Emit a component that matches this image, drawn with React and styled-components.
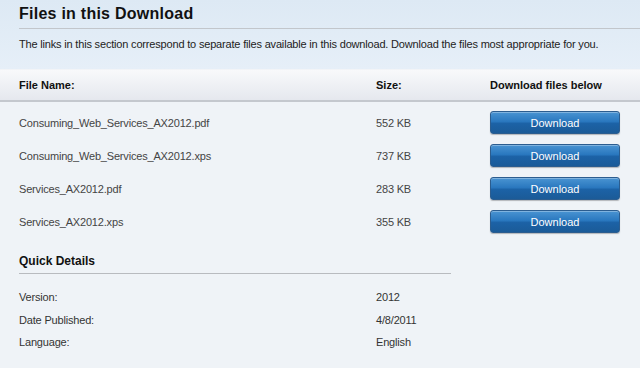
import React from 'react';
import styled, { createGlobalStyle } from 'styled-components';

const GlobalStyle = createGlobalStyle`
  html, body {
    margin: 0;
    padding: 0;
    background: #eff3f7;
  }
  body {
    font-family: Tahoma, "Liberation Sans", sans-serif;
    font-size: 11px;
    color: #333;
  }
`;

const Page = styled.div`
  width: 640px;
  height: 368px;
  overflow: hidden;
  background: #eff3f7;
`;

const Intro = styled.div`
  background: linear-gradient(#dde9f4, #e6eff8);
  padding: 5px 0 0 19px;
  height: 69px;
  box-sizing: border-box;
`;

const Title = styled.h2`
  margin: 0;
  font-size: 16px;
  font-weight: bold;
  letter-spacing: 0.25px;
  color: #111;
  padding-bottom: 5px;
  border-bottom: 1px solid #c2c6cb;
`;

const Lead = styled.p`
  margin: 9px 0 0;
  color: #222;
  letter-spacing: -0.18px;
`;

const HeaderBar = styled.div`
  display: grid;
  grid-template-columns: 357px 114px 150px;
  align-items: center;
  height: 30px;
  padding-left: 19px;
  background: linear-gradient(#f8f9fb, #e5e8ee);
  border-top: 1px solid #f2f4f7;
  border-bottom: 2px solid #c4c8ce;
  font-weight: bold;
  color: #111;
`;

const Table = styled.div`
  padding: 4px 0 0 19px;
`;

const Row = styled.div`
  display: grid;
  grid-template-columns: 357px 114px 130px;
  align-items: center;
  height: 33px;
  color: #444;
  letter-spacing: -0.18px;
`;

const DownloadButton = styled.button`
  width: 130px;
  height: 23px;
  border: 1px solid #2c5d8f;
  border-radius: 3px;
  background: linear-gradient(#4a94d2 0%, #2a78bf 45%, #1c62a6 55%, #1b5b98 100%);
  color: #fff;
  font-family: inherit;
  font-size: 11px;
  padding: 0;
  cursor: pointer;
  box-shadow: 0 1px 1px rgba(0, 0, 0, 0.25), inset 0 1px 0 rgba(255, 255, 255, 0.3);
`;

const Details = styled.div`
  padding: 16px 0 0 19px;
  width: 432px;
`;

const SubTitle = styled.h3`
  margin: 0;
  font-size: 12px;
  font-weight: bold;
  color: #111;
  padding-bottom: 5px;
  border-bottom: 1px solid #b8bbbf;
`;

const DetailList = styled.div`
  padding-top: 12px;
`;

const DetailRow = styled.div`
  display: grid;
  grid-template-columns: 357px 1fr;
  height: 22.5px;
  align-items: center;
  color: #333;
  letter-spacing: -0.18px;
`;

const files = [
  { name: 'Consuming_Web_Services_AX2012.pdf', size: '552 KB' },
  { name: 'Consuming_Web_Services_AX2012.xps', size: '737 KB' },
  { name: 'Services_AX2012.pdf', size: '283 KB' },
  { name: 'Services_AX2012.xps', size: '355 KB' },
];

const details = [
  ['Version:', '2012'],
  ['Date Published:', '4/8/2011'],
  ['Language:', 'English'],
];

export default function App() {
  return (
    <Page>
      <GlobalStyle />
      <Intro>
        <Title>Files in this Download</Title>
        <Lead>
          The links in this section correspond to separate files available in this download. Download the files most
          appropriate for you.
        </Lead>
      </Intro>
      <HeaderBar>
        <span>File Name:</span>
        <span>Size:</span>
        <span>Download files below</span>
      </HeaderBar>
      <Table>
        {files.map(f => (
          <Row key={f.name}>
            <span>{f.name}</span>
            <span>{f.size}</span>
            <DownloadButton>Download</DownloadButton>
          </Row>
        ))}
      </Table>
      <Details>
        <SubTitle>Quick Details</SubTitle>
        <DetailList>
          {details.map(([k, v]) => (
            <DetailRow key={k}>
              <span>{k}</span>
              <span>{v}</span>
            </DetailRow>
          ))}
        </DetailList>
      </Details>
    </Page>
  );
}
